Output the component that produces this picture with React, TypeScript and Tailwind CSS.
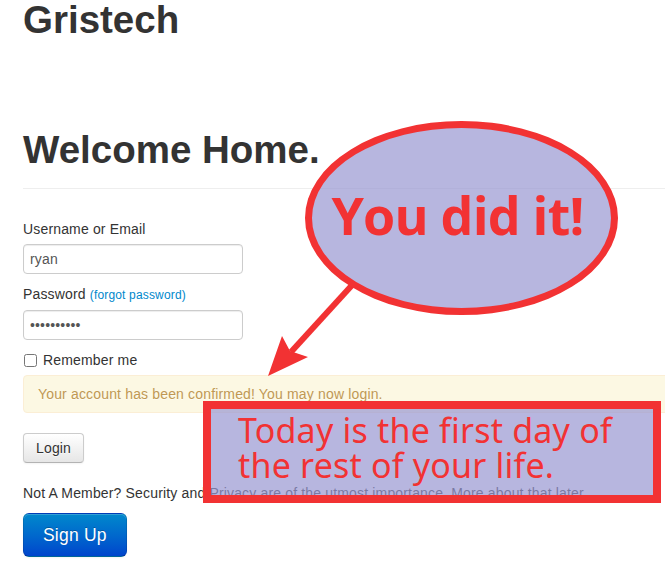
import React from "react"

const Callout = () => {
  return (
    <>
      <svg className="absolute left-0 top-0 pointer-events-none" width="665" height="588" viewBox="0 0 665 588">
        <line x1="354" y1="283" x2="291" y2="352" stroke="#f23233" strokeWidth="6" />
        <polygon points="268,376 282,336 290,351 308,357" fill="#f23233" />
      </svg>
      <div className="absolute left-[305px] top-[121px] w-[313px] h-[194px] rounded-[50%] border-[7px] border-[#f23233] bg-[rgba(152,151,209,0.7)]">
        <div className="absolute left-0 right-[8px] top-[61px] text-center text-[52px] leading-[52px] font-bold tracking-[-0.8px] text-[#f23233] font-['Open_Sans',sans-serif] whitespace-nowrap">
          You did it!
        </div>
      </div>
      <div className="absolute left-[203px] top-[401px] w-[458px] h-[102px] border-[8px] border-[#f23233] bg-[rgba(152,151,209,0.7)] pl-[27px] pt-[4px]">
        <div className="text-[34px] leading-[35px] tracking-[0.2px] text-[#f23233] font-['Noto_Sans',sans-serif]">
          Today is the first day of
          <br />
          the rest of your life.
        </div>
      </div>
    </>
  )
}

export default function App() {
  return (
    <div className="relative w-[665px] h-[588px] overflow-hidden bg-white font-['Liberation_Sans',Arial,sans-serif] text-[#333] text-[14px] leading-[20px]">
      <div className="pl-[23px] w-[720px]">
        <h1 className="m-0 h-[40px] text-[38.5px] leading-[40px] font-bold">Gristech</h1>

        <div className="mt-[90px] pb-[18px] border-b border-[#eee]">
          <h1 className="m-0 text-[38.5px] leading-[40px] font-bold">Welcome Home.</h1>
        </div>

        <form className="mt-[30px] tracking-[0.16px]" onSubmit={(e) => e.preventDefault()}>
          <label className="block mb-[5px]">Username or Email</label>
          <input
            type="text"
            readOnly
            value="ryan"
            className="block w-[220px] h-[30px] mb-[10px] px-[6px] border border-[#ccc] rounded-[4px] text-[14px] text-[#555] shadow-[inset_0_1px_1px_rgba(0,0,0,0.075)] outline-none"
          />

          <label className="block mb-[5px]">
            Password <a href="#" className="text-[12px] text-[#0088cc]">(forgot password)</a>
          </label>
          <input
            type="password"
            readOnly
            value="ryanryanry"
            className="block w-[220px] h-[30px] mb-[10px] px-[6px] border border-[#ccc] rounded-[4px] text-[14px] text-[#555] shadow-[inset_0_1px_1px_rgba(0,0,0,0.075)] outline-none"
          />

          <label className="flex items-start h-[20px]">
            <input type="checkbox" className="mt-[4px] ml-[1px] mr-[6px] w-[13px] h-[13px]" />
            Remember me
          </label>

          <div className="mt-[5px] h-[38px] py-[8px] pl-[14px] pr-[35px] bg-[#fcf8e3] border border-[#fbeed5] rounded-[4px] text-[#c09853] [text-shadow:0_1px_0_rgba(255,255,255,0.5)]">
            Your account has been confirmed! You may now login.
          </div>

          <button
            type="submit"
            className="mt-[20px] block h-[30px] px-[12px] border border-[#ccc] border-b-[#b3b3b3] rounded-[4px] bg-gradient-to-b from-white to-[#e6e6e6] text-[#333] text-[14px] leading-[20px] shadow-[inset_0_1px_0_rgba(255,255,255,0.2),0_1px_2px_rgba(0,0,0,0.05)] [text-shadow:0_1px_1px_rgba(255,255,255,0.75)]"
          >
            Login
          </button>
        </form>

        <p className="mt-[20px] mb-[10px] whitespace-nowrap tracking-[0.16px]">
          Not A Member? Security and Privacy are of the utmost importance. More about that later.
        </p>

        <button className="block h-[44px] px-[19px] border border-[rgba(0,0,0,0.1)] border-b-[rgba(0,0,0,0.25)] rounded-[6px] bg-gradient-to-b from-[#0088cc] to-[#0044cc] text-white text-[17.5px] leading-[20px] tracking-[0.2px] shadow-[inset_0_1px_0_rgba(255,255,255,0.2),0_1px_2px_rgba(0,0,0,0.05)] [text-shadow:0_-1px_0_rgba(0,0,0,0.25)]">
          Sign Up
        </button>
      </div>

      <Callout />
    </div>
  )
}
